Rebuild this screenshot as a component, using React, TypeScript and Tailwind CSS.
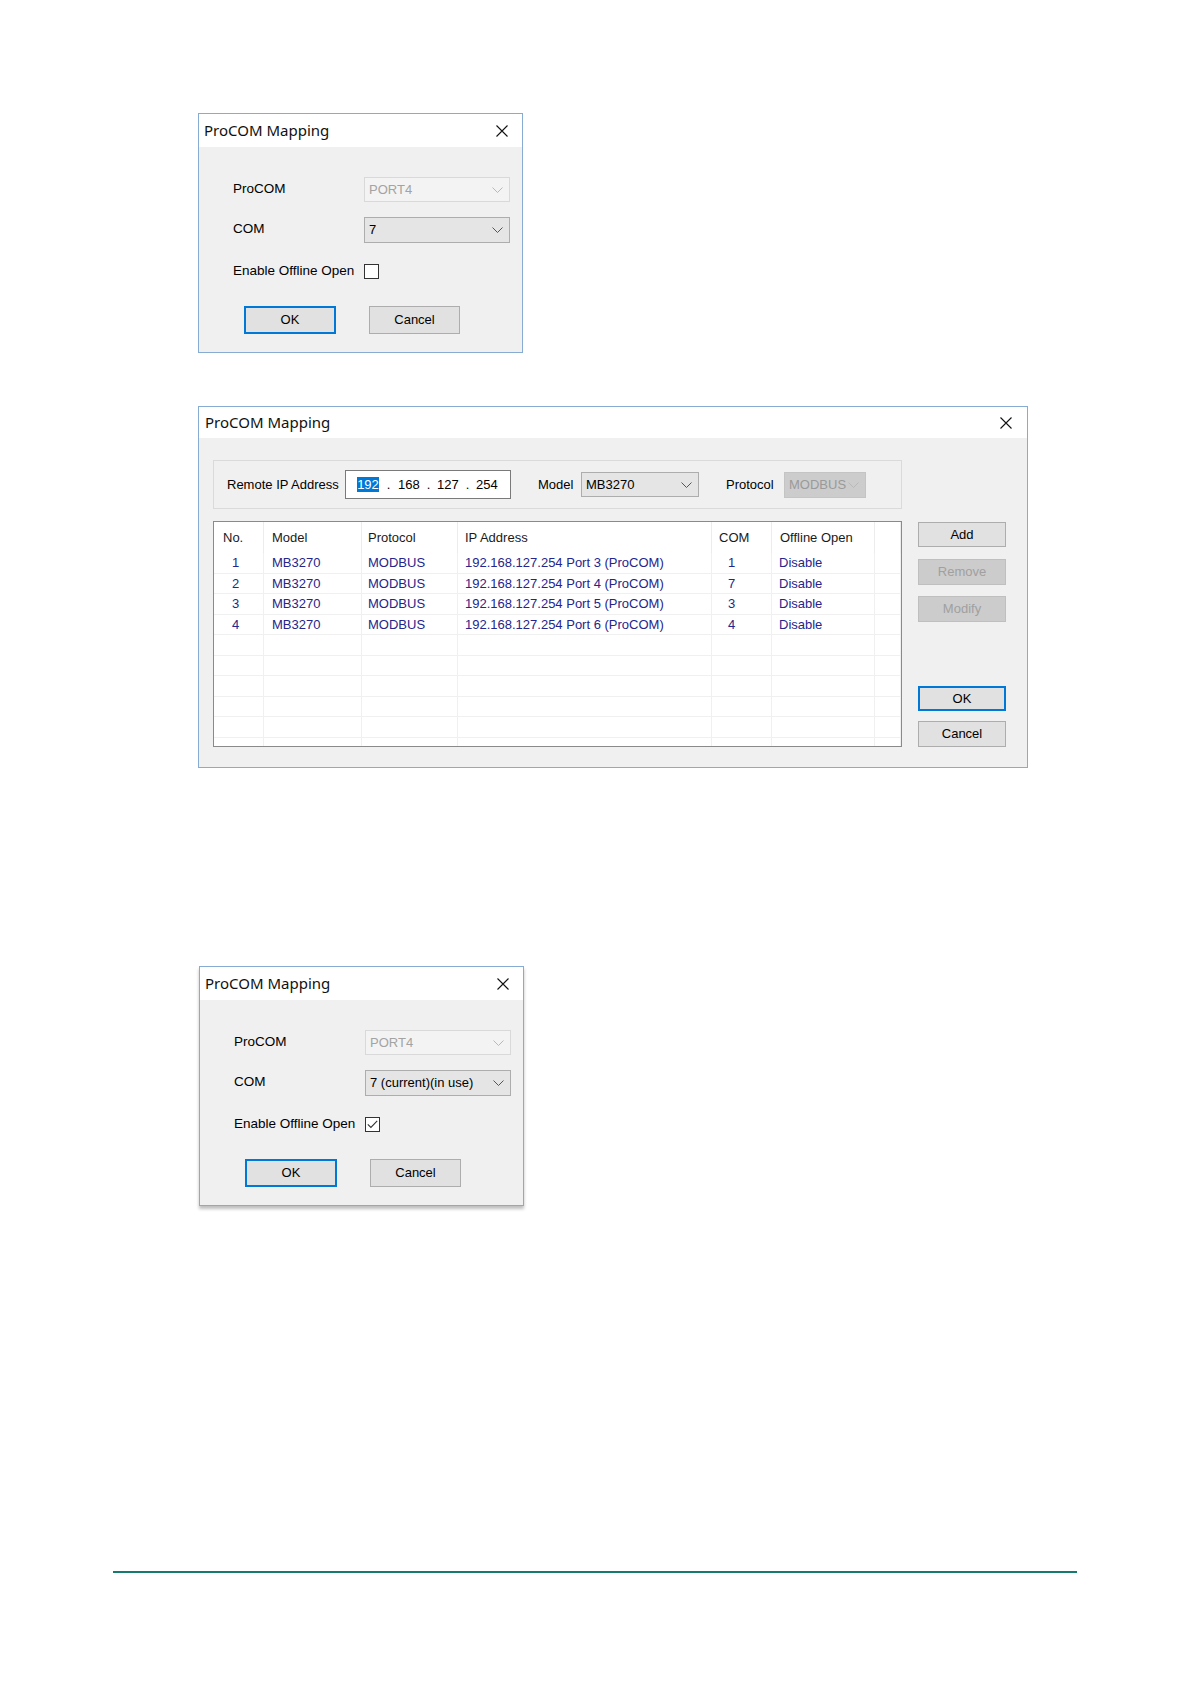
import React from "react"

const ui = "font-['Liberation_Sans',Arial,sans-serif]"

function CloseIcon() {
  return (
    <svg width="12" height="12" viewBox="0 0 12 12" aria-hidden>
      <path d="M0.5 0.5 L11.5 11.5 M11.5 0.5 L0.5 11.5" stroke="#111" strokeWidth="1.1" fill="none" />
    </svg>
  )
}

function Chevron({ color }: { color: string }) {
  return (
    <svg width="11" height="6" viewBox="0 0 11 6" aria-hidden>
      <path d="M0.5 0.5 L5.5 5.5 L10.5 0.5" stroke={color} strokeWidth="1" fill="none" />
    </svg>
  )
}

type ComboKind = "normal" | "disabled" | "grey"

function Combo({ text, kind, className }: { text: string; kind: ComboKind; className: string }) {
  const look =
    kind === "normal"
      ? "bg-[#e5e5e5] border-[#adadad] text-black"
      : kind === "disabled"
        ? "bg-[#f3f3f3] border-[#d9d9d9] text-[#a3a3a3]"
        : "bg-[#cccccc] border-[#c4c4c4] text-[#9a9a9a]"
  const chev = kind === "normal" ? "#555" : "#b8b8b8"
  return (
    <div className={`flex items-center justify-between border pl-[4px] pr-[6px] text-[13px] ${look} ${className}`}>
      <span className="whitespace-nowrap">{text}</span>
      <Chevron color={chev} />
    </div>
  )
}

function Checkbox({ checked }: { checked: boolean }) {
  return (
    <div className="flex size-[15px] items-center justify-center border border-[#333] bg-white">
      {checked && (
        <svg width="11" height="9" viewBox="0 0 11 9" aria-hidden>
          <path d="M0.8 4.3 L3.9 7.5 L10.2 0.8" stroke="#333" strokeWidth="1.1" fill="none" />
        </svg>
      )}
    </div>
  )
}

function Button({ label, primary, disabled, className }: { label: string; primary?: boolean; disabled?: boolean; className: string }) {
  const look = primary
    ? "border-2 border-[#0078d7] bg-[#e1e1e1] text-black"
    : disabled
      ? "border border-[#bfbfbf] bg-[#cccccc] text-[#a0a0a0]"
      : "border border-[#adadad] bg-[#e1e1e1] text-black"
  return <div className={`flex items-center justify-center text-[13px] ${look} ${className}`}>{label}</div>
}

function TitleBar({ height, padLeft, closeRight }: { height: string; padLeft: string; closeRight: string }) {
  return (
    <div className={`flex items-center justify-between bg-white ${height} ${padLeft} ${closeRight}`}>
      <span className="font-['Noto_Sans',sans-serif] text-[15px] leading-none text-[#111]">ProCOM Mapping</span>
      <CloseIcon />
    </div>
  )
}

function SmallDialog({ com, checked, shadow }: { com: string; checked: boolean; shadow?: boolean }) {
  return (
    <div
      className={`w-[325px] border border-[#86acd4] ${ui} ${shadow ? "shadow-[0_3px_3px_rgba(0,0,0,0.25)]" : ""}`}
    >
      <TitleBar height="h-[33px]" padLeft="pl-[5px]" closeRight="pr-[14px]" />
      <div className="flex flex-col bg-[#f0f0f0] pl-[34px] pt-[30px] pb-[18px] text-black">
        <div className="flex h-[25px] items-center">
          <span className="w-[131px] text-[13.5px]">ProCOM</span>
          <Combo text="PORT4" kind="disabled" className="h-[25px] w-[146px]" />
        </div>
        <div className="mt-[15px] flex h-[25px] items-center">
          <span className="w-[131px] text-[13.5px]">COM</span>
          <Combo text={com} kind="normal" className="h-[26px] w-[146px]" />
        </div>
        <div className="mt-[17px] flex h-[25px] items-center">
          <span className="w-[131px] text-[13.5px]">Enable Offline Open</span>
          <Checkbox checked={checked} />
        </div>
        <div className="mt-[22px] flex gap-[33px] pl-[11px]">
          <Button label="OK" primary className="h-[28px] w-[92px]" />
          <Button label="Cancel" className="h-[28px] w-[91px]" />
        </div>
      </div>
    </div>
  )
}

const cols = ["w-[50px]", "w-[98px]", "w-[96px]", "w-[254px]", "w-[60px]", "w-[103px]", "flex-1"]
const pads = ["pl-[9px]", "pl-[8px]", "pl-[6px]", "pl-[7px]", "pl-[7px]", "pl-[8px]", ""]
const rowPads = ["pl-[18px]", "pl-[8px]", "pl-[6px]", "pl-[7px]", "pl-[16px]", "pl-[7px]", ""]

const headers = ["No.", "Model", "Protocol", "IP Address", "COM", "Offline Open", ""]
const rows = [
  ["1", "MB3270", "MODBUS", "192.168.127.254 Port 3 (ProCOM)", "1", "Disable", ""],
  ["2", "MB3270", "MODBUS", "192.168.127.254 Port 4 (ProCOM)", "7", "Disable", ""],
  ["3", "MB3270", "MODBUS", "192.168.127.254 Port 5 (ProCOM)", "3", "Disable", ""],
  ["4", "MB3270", "MODBUS", "192.168.127.254 Port 6 (ProCOM)", "4", "Disable", ""],
  ["", "", "", "", "", "", ""],
  ["", "", "", "", "", "", ""],
  ["", "", "", "", "", "", ""],
  ["", "", "", "", "", "", ""],
  ["", "", "", "", "", "", ""],
  ["", "", "", "", "", "", ""],
]

function MappingTable() {
  return (
    <div className="mt-[12px] h-[226px] overflow-hidden border border-[#8a8a8a] bg-white text-[13px]">
      <div className="flex h-[31px]">
        {headers.map((h, i) => (
          <div key={i} className={`flex items-center border-r border-[#ececec] text-[#1a1a1a] ${cols[i]} ${pads[i]}`}>
            {h}
          </div>
        ))}
      </div>
      {rows.map((r, ri) => (
        <div key={ri} className="flex h-[20.5px] border-b border-[#f0f0f0]">
          {r.map((c, i) => (
            <div
              key={i}
              className={`flex items-center whitespace-nowrap border-r border-[#f0f0f0] text-[#25258c] ${cols[i]} ${rowPads[i]}`}
            >
              {c}
            </div>
          ))}
        </div>
      ))}
    </div>
  )
}

function IpBox() {
  return (
    <div className="flex h-[29px] w-[166px] items-center border border-[#7a7a7a] bg-white pl-[11px] text-[13px] text-black">
      <span className="flex h-[15px] w-[22px] items-center justify-center bg-[#0078d7] text-white">192</span>
      <span className="w-[19px] text-center">.</span>
      <span className="w-[22px]">168</span>
      <span className="w-[17px] text-center">.</span>
      <span className="w-[22px]">127</span>
      <span className="w-[17px] text-center">.</span>
      <span>254</span>
    </div>
  )
}

function LargeDialog() {
  return (
    <div className={`w-[830px] border border-[#86acd4] ${ui}`}>
      <TitleBar height="h-[31px]" padLeft="pl-[6px]" closeRight="pr-[15px]" />
      <div className="flex bg-[#f0f0f0] pl-[14px] pt-[22px] pb-[20px] text-black">
        <div className="flex w-[689px] flex-col">
          <div className="flex h-[49px] items-center border border-[#dadada] pl-[13px] text-[13px]">
            <span className="w-[118px]">Remote IP Address</span>
            <IpBox />
            <span className="ml-[27px] w-[43px]">Model</span>
            <Combo text="MB3270" kind="normal" className="h-[25px] w-[118px]" />
            <span className="ml-[27px] w-[58px]">Protocol</span>
            <Combo text="MODBUS" kind="grey" className="h-[26px] w-[82px]" />
          </div>
          <MappingTable />
        </div>
        <div className="ml-[16px] flex w-[88px] flex-col pt-[62px]">
          <Button label="Add" className="h-[25px] w-[88px]" />
          <Button label="Remove" disabled className="mt-[12px] h-[26px] w-[88px]" />
          <Button label="Modify" disabled className="mt-[11px] h-[26px] w-[88px]" />
          <Button label="OK" primary className="mt-[64px] h-[25px] w-[88px]" />
          <Button label="Cancel" className="mt-[10px] h-[26px] w-[88px]" />
        </div>
      </div>
    </div>
  )
}

export default function App() {
  return (
    <div className="min-h-[1684px] w-[1191px] bg-white pt-[113px]">
      <div className="ml-[198px]">
        <SmallDialog com="7" checked={false} />
      </div>
      <div className="ml-[198px] mt-[53px]">
        <LargeDialog />
      </div>
      <div className="ml-[199px] mt-[198px]">
        <SmallDialog com="7 (current)(in use)" checked shadow />
      </div>
      <div className="ml-[113px] mt-[365px] h-[2px] w-[964px] bg-[#157a70]" />
    </div>
  )
}
